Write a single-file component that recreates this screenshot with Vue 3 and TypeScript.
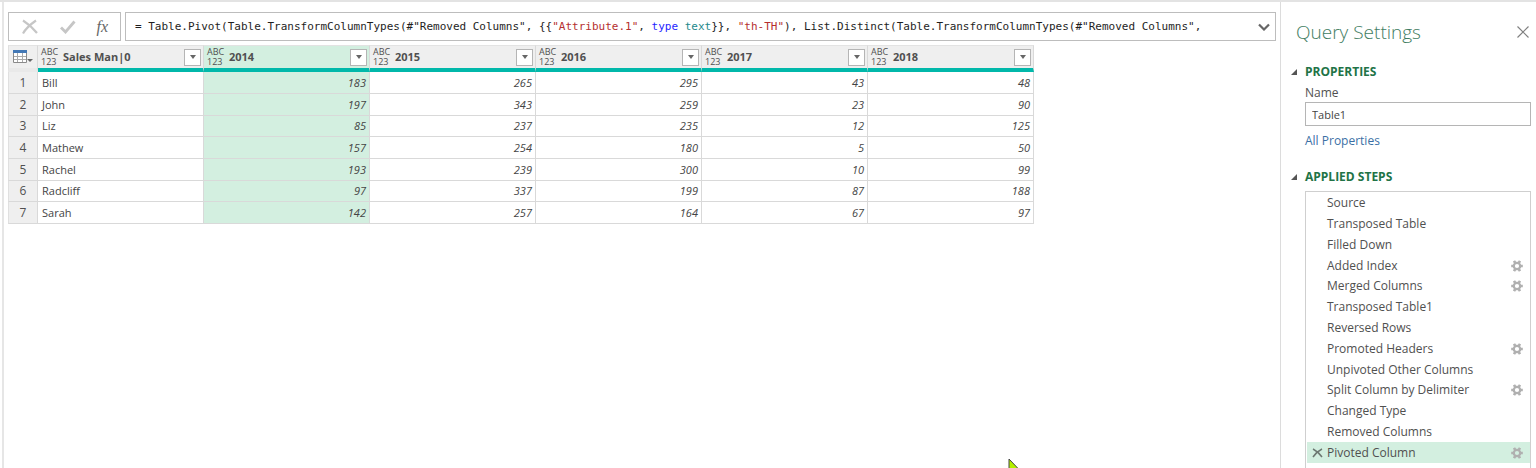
<script setup lang="ts">
import { ref } from 'vue'

interface Token { text: string; kind: 'plain' | 'string' | 'keyword' | 'type' }
interface Step { name: string; configurable: boolean }

const formula: Token[] = [
  { text: '= Table.Pivot(Table.TransformColumnTypes(#"Removed Columns", {{', kind: 'plain' },
  { text: '"Attribute.1"', kind: 'string' },
  { text: ', ', kind: 'plain' },
  { text: 'type', kind: 'keyword' },
  { text: ' ', kind: 'plain' },
  { text: 'text', kind: 'type' },
  { text: '}}, ', kind: 'plain' },
  { text: '"th-TH"', kind: 'string' },
  { text: '), List.Distinct(Table.TransformColumnTypes(#"Removed Columns",', kind: 'plain' },
]

const columns: string[] = ['Sales Man|0', '2014', '2015', '2016', '2017', '2018']
const selectedColumn = ref<number>(1)

const rows: (string | number)[][] = [
  ['Bill', 183, 265, 295, 43, 48],
  ['John', 197, 343, 259, 23, 90],
  ['Liz', 85, 237, 235, 12, 125],
  ['Mathew', 157, 254, 180, 5, 50],
  ['Rachel', 193, 239, 300, 10, 99],
  ['Radcliff', 97, 337, 199, 87, 188],
  ['Sarah', 142, 257, 164, 67, 97],
]

const steps: Step[] = [
  { name: 'Source', configurable: false },
  { name: 'Transposed Table', configurable: false },
  { name: 'Filled Down', configurable: false },
  { name: 'Added Index', configurable: true },
  { name: 'Merged Columns', configurable: true },
  { name: 'Transposed Table1', configurable: false },
  { name: 'Reversed Rows', configurable: false },
  { name: 'Promoted Headers', configurable: true },
  { name: 'Unpivoted Other Columns', configurable: false },
  { name: 'Split Column by Delimiter', configurable: true },
  { name: 'Changed Type', configurable: false },
  { name: 'Removed Columns', configurable: false },
  { name: 'Pivoted Column', configurable: true },
]
const selectedStep = ref<number>(12)
const queryName = ref<string>('Table1')
</script>

<template>
  <div class="editor">
    <main class="preview">
      <div class="formula-row">
        <div class="formula-actions">
          <button type="button" aria-label="Cancel">
            <svg width="18" height="16" viewBox="0 0 18 16"><path d="M2 1.500C6 4 12 9 16 14M15 1.500C10 5 5 9 2 14.500" fill="none" stroke="#c6c6c6" stroke-width="2.200" /></svg>
          </button>
          <button type="button" aria-label="Accept">
            <svg width="16" height="14" viewBox="0 0 16 14"><path d="M1 7.500L5.500 12L14.500 1.500" fill="none" stroke="#c6c6c6" stroke-width="2.800" /></svg>
          </button>
          <button type="button" class="fx" aria-label="Insert step">fx</button>
        </div>
        <div class="formula-box">
          <code class="formula"><span v-for="(t, i) in formula" :key="i" :class="t.kind">{{ t.text }}</span></code>
          <button type="button" aria-label="Expand formula bar">
            <svg width="12" height="8" viewBox="0 0 12 8"><path d="M1 1.500L6 6.500L11 1.500" fill="none" stroke="#666" stroke-width="2.200" /></svg>
          </button>
        </div>
      </div>

      <div class="grid-area">
        <table>
          <thead>
            <tr>
              <th class="corner">
                <button type="button" aria-label="Table menu">
                  <svg width="20" height="14" viewBox="0 0 20 14">
                    <path d="M.500 3V12.500H13.500V3" fill="#fff" stroke="#8a8a8a" />
                    <path d="M4.500 3V12M9.500 3V12M1 6.500H13M1 9.500H13" stroke="#aaa" fill="none" />
                    <path d="M0 0H14V3H0Z" fill="#4378b5" />
                    <path d="M14 9H20L17 12Z" fill="#666" />
                  </svg>
                </button>
              </th>
              <th v-for="(c, i) in columns" :key="c" scope="col" :class="{ selected: i === selectedColumn }">
                <div class="head">
                  <span class="type-icon"><span>ABC</span><span>123</span></span>
                  <span class="label">{{ c }}</span>
                  <button type="button" class="filter" :aria-label="'Filter ' + c">
                    <svg width="8" height="4" viewBox="0 0 8 4"><path d="M1 0H7L4 4Z" fill="#666" /></svg>
                  </button>
                </div>
              </th>
            </tr>
          </thead>
          <tbody>
            <tr v-for="(r, ri) in rows" :key="ri">
              <th scope="row">{{ ri + 1 }}</th>
              <td v-for="(v, ci) in r" :key="ci" :class="{ number: ci > 0, selected: ci === selectedColumn }">{{ v }}</td>
            </tr>
          </tbody>
        </table>
      </div>
    </main>

    <aside class="settings">
      <header>
        <h1>Query Settings</h1>
        <button type="button" aria-label="Close">
          <svg width="14" height="14" viewBox="0 0 14 14"><path d="M1.500 1.500L12.500 12.500M12.500 1.500L1.500 12.500" stroke="#808080" stroke-width="1.200" /></svg>
        </button>
      </header>

      <section class="properties">
        <h2>
          <button type="button">
            <svg width="6" height="6" viewBox="0 0 6 6"><path d="M6 0V6H0Z" fill="#555" /></svg>PROPERTIES
          </button>
        </h2>
        <div class="body">
          <label for="query-name">Name</label>
          <input id="query-name" v-model="queryName" type="text" />
          <a href="#">All Properties</a>
        </div>
      </section>

      <section class="applied">
        <h2>
          <button type="button">
            <svg width="6" height="6" viewBox="0 0 6 6"><path d="M6 0V6H0Z" fill="#555" /></svg>APPLIED STEPS
          </button>
        </h2>
        <ol class="steps">
          <li v-for="(s, i) in steps" :key="s.name" :class="{ active: i === selectedStep }">
            <span class="remove">
              <button v-if="i === selectedStep" type="button" aria-label="Delete step">
                <svg width="11" height="10" viewBox="0 0 11 10"><path d="M1 1C4 2.500 7 5 10 9M10 1C6 3 3 6 1 9" fill="none" stroke="#6c7771" stroke-width="1.500" /></svg>
              </button>
            </span>
            <button type="button" class="step-name" @click="selectedStep = i">{{ s.name }}</button>
            <button v-if="s.configurable" type="button" class="gear" :aria-label="'Edit ' + s.name">
              <svg width="12" height="12" viewBox="0 0 12 12">
                <circle cx="6" cy="6" r="3.200" fill="none" stroke="#b0b0b0" stroke-width="2.200" />
                <path d="M0.200 6H2.500M9.500 6H11.800M3 .900L4.300 3M7.700 9L9 11.100M9 .900L7.700 3M4.300 9L3 11.100" stroke="#b0b0b0" stroke-width="2.600" />
              </svg>
            </button>
          </li>
        </ol>
      </section>
    </aside>

    <svg class="pointer" width="14" height="20" viewBox="0 0 14 20"><path d="M1 1V17L5 13.500L12 12.500Z" fill="#b4f000" stroke="#444" /></svg>
  </div>
</template>

<style>
body { background: #fff; }
</style>

<style scoped>
* { box-sizing: border-box; }
.editor {
  position: relative;
  display: flex;
  height: 100vh;
  overflow: hidden;
  border-top: 2px solid #e3e3e3;
  font: 12px/16px "Open Sans", "Noto Sans", sans-serif;
  color: #505050;
}
button {
  display: inline-flex;
  align-items: center;
  justify-content: center;
  padding: 0;
  border: 0;
  background: none;
  color: inherit;
  font: inherit;
}
.preview {
  flex: 1;
  min-width: 0;
  margin-left: 2px;
  padding: 10px 4px 0 4px;
  border-left: 2px solid #e6e6e6;
  border-right: 1px solid #dcdcdc;
}
.formula-row { display: flex; gap: 4px; height: 29px; }
.formula-actions, .formula-box { display: flex; align-items: center; border: 1px solid #bdbdbd; }
.formula-actions { justify-content: space-between; width: 113px; padding: 0 12px; }
.fx { font: italic 16px/20px "Liberation Serif", serif; color: #666; }
.formula-box { flex: 1; min-width: 0; padding: 0 5px 0 9px; }
.formula {
  flex: 1;
  overflow: hidden;
  white-space: pre;
  font: 11px/16px "DejaVu Sans Mono", monospace;
  color: #1e1e1e;
}
.string { color: #b52f2f; }
.keyword { color: #1f1fff; }
.type { color: #23898c; }

.grid-area { margin-top: 4px; overflow: hidden; }
table {
  width: 1026px;
  table-layout: fixed;
  border-collapse: separate;
  border-spacing: 0;
  font-size: 11px;
}
th, td { padding: 0; border-right: 1px solid #d9d9d9; border-bottom: 1px solid #d9d9d9; }
thead th {
  height: 27px;
  background: #efefef;
  border-top: 1px solid #e3e3e3;
  border-bottom: 4px solid #01b8aa;
}
thead .corner { width: 30px; border-bottom: 4px solid #e9e9e9; }
.corner, tbody th { border-left: 1px solid #e0e0e0; }
.corner button { display: flex; margin-left: 4px; }
.head { display: flex; align-items: center; height: 22px; padding: 0 2px 0 3px; }
.type-icon {
  display: flex;
  flex-direction: column;
  width: 22px;
  font-size: 9px;
  font-weight: 400;
  line-height: 10px;
  text-align: left;
}
.label { flex: 1; text-align: left; font-weight: 700; }
.filter { width: 17px; height: 17px; border: 1px solid #b5b5b5; background: #fff; }
tbody tr { height: 22px; }
tbody tr:nth-child(3n) { height: 21px; }
tbody th { background: #efefef; font-size: 12px; font-weight: 400; line-height: 16px; }
td { padding: 0 4px; color: #444; }
.number { padding: 0 3px; text-align: right; font-style: italic; }
thead .selected, .selected { background: #d3efe0; }

.settings { width: 255px; flex: none; padding: 0 5px 0 10px; }
header { display: flex; align-items: center; justify-content: space-between; padding: 16px 1px 0 5px; }
h1 { margin: 0; font-size: 19px; font-weight: 300; line-height: 28px; color: #3f7d62; }
h2 { margin: 0; font-size: 12px; font-weight: 700; line-height: 18px; color: #217346; }
h2 button { gap: 8px; }
.properties { margin-top: 16px; }
.body { display: flex; flex-direction: column; padding-left: 14px; }
.body label { margin: 4px 0 1px; }
.body input {
  width: 100%;
  height: 24px;
  padding: 0 6px;
  border: 1px solid #b5b5b5;
  background: #fff;
  color: #444;
  font: 11px/16px "Open Sans", "Noto Sans", sans-serif;
}
.body a { margin-top: 7px; color: #3b6fa5; text-decoration: none; }
.applied { margin-top: 18px; }
.steps {
  height: 300px;
  margin: 5px 0 0 14px;
  padding: 0 0 0 1px;
  border: 1px solid #cfcfcf;
  list-style: none;
}
.steps li { display: flex; align-items: center; height: 21px; padding-right: 7px; }
.steps li:nth-child(5n) { height: 20px; }
.steps .active { background: #d3efe0; }
.remove { display: flex; justify-content: center; width: 20px; }
.step-name { flex: 1; justify-content: flex-start; }
.pointer { position: absolute; left: 1008px; top: 456px; }
</style>
